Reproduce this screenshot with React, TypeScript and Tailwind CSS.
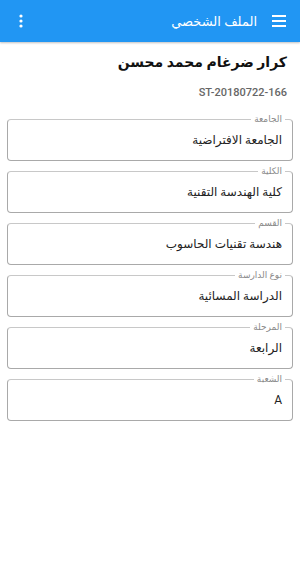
import React from 'react';

const FIELDS = [
  { label: 'الجامعة', value: 'الجامعة الافتراضية' },
  { label: 'الكلية', value: 'كلية الهندسة التقنية' },
  { label: 'القسم', value: 'هندسة تقنيات الحاسوب' },
  { label: 'نوع الدارسة', value: 'الدراسة المسائية' },
  { label: 'المرحلة', value: 'الرابعة' },
  { label: 'الشعبة', value: 'A' },
];

const App: React.FC = () => {
  return (
    <div dir="rtl" className="w-[300px] h-[581px] bg-white font-['Roboto','DejaVu_Sans',sans-serif] overflow-hidden">
      <header className="h-[42px] bg-[#2196F3] flex items-center pr-[14px] pl-[17px] shadow-[0_1px_2px_rgba(0,0,0,0.25)]">
        <svg className="w-[14px] h-[12px]" viewBox="0 0 14 12" fill="#ffffff">
          <rect x="0" y="0" width="14" height="2" />
          <rect x="0" y="5" width="14" height="2" />
          <rect x="0" y="10" width="14" height="2" />
        </svg>
        <h1 className="mr-[15px] text-white text-[13px] leading-none">الملف الشخصي</h1>
        <div className="flex-1" />
        <svg className="w-[8px] h-[14px]" viewBox="0 0 8 14" fill="#ffffff">
          <circle cx="4" cy="2" r="1.6" />
          <circle cx="4" cy="7" r="1.6" />
          <circle cx="4" cy="12" r="1.6" />
        </svg>
      </header>

      <div className="px-[7px]">
        <div className="pr-[6px] pt-[8px]">
          <h2 className="text-[14px] leading-[24px] font-bold text-[#111]">كرار ضرغام محمد محسن</h2>
          <p dir="ltr" className="text-right mt-[11px] text-[11px] leading-[16px] font-medium text-[#666]">ST-20180722-166</p>
        </div>

        <div className="mt-[12px] flex flex-col gap-[4px]">
          {FIELDS.map((f) => (
            <fieldset
              key={f.label}
              className="border border-[#a9a9a9] border-t-[#c8c8c8] rounded-[4px] pr-[7px] pl-[10px] h-[48px]"
            >
              <legend className="px-[3px] text-[9px] leading-[12px] text-[#8a8a8a]">{f.label}</legend>
              <div className="pr-[3px] pt-[5px] text-[12px] leading-[20px] text-[#222]">{f.value}</div>
            </fieldset>
          ))}
        </div>
      </div>
    </div>
  );
};

export default App;
